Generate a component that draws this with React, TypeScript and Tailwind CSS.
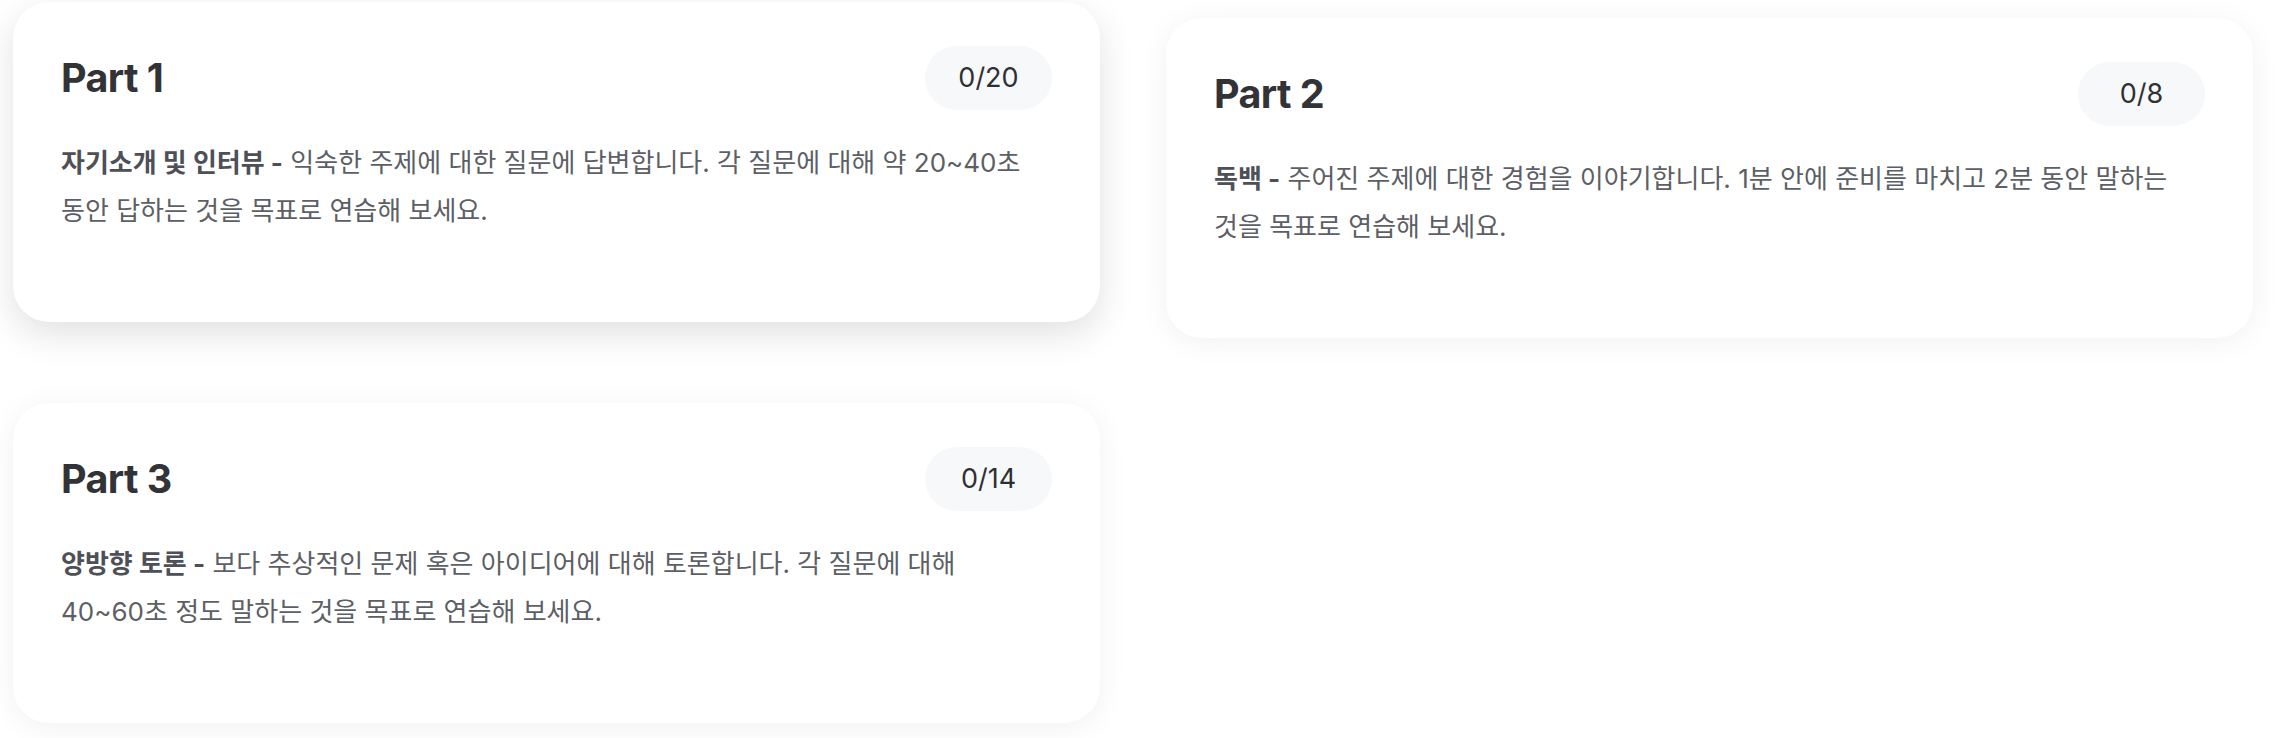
import React from "react";

type Part = {
  title: string;
  count: string;
  lead: string;
  body: string;
  hovered?: boolean;
};

const parts: Part[] = [
  {
    title: "Part 1",
    count: "0/20",
    lead: "자기소개 및 인터뷰 -",
    body: " 익숙한 주제에 대한 질문에 답변합니다. 각 질문에 대해 약 20~40초 동안 답하는 것을 목표로 연습해 보세요.",
    hovered: true,
  },
  {
    title: "Part 2",
    count: "0/8",
    lead: "독백 -",
    body: " 주어진 주제에 대한 경험을 이야기합니다. 1분 안에 준비를 마치고 2분 동안 말하는 것을 목표로 연습해 보세요.",
  },
  {
    title: "Part 3",
    count: "0/14",
    lead: "양방향 토론 -",
    body: " 보다 추상적인 문제 혹은 아이디어에 대해 토론합니다. 각 질문에 대해 40~60초 정도 말하는 것을 목표로 연습해 보세요.",
  },
];

function Card({ p }: { p: Part }) {
  return (
    <div
      className={
        p.hovered
          ? "h-[320px] rounded-[36px] bg-white px-12 pt-[44px] -translate-y-4 shadow-[0_12px_36px_rgba(0,0,0,0.12)]"
          : "h-[320px] rounded-[36px] bg-white px-12 pt-[44px] shadow-[0_4px_30px_rgba(0,0,0,0.06)]"
      }
    >
      <div className="flex h-[64px] items-center justify-between">
        <h2 className="text-[39.5px] font-bold leading-[44px] tracking-[-0.6px] text-[#323337]">
          {p.title}
        </h2>
        <span className="flex h-[64px] min-w-[127px] items-center justify-center rounded-full bg-[#f7f8fa] px-[30px] text-[27px] leading-[40px] text-[#2f3034]">
          {p.count}
        </span>
      </div>
      <p className="mt-[29px] break-keep text-[26px] leading-[48px] text-[#5c5f65]">
        <span className="font-bold text-[#4d5056]">{p.lead}</span>
        {p.body}
      </p>
    </div>
  );
}

export default function App() {
  return (
    <div className="h-[738px] w-full bg-white font-['Inter','Noto_Sans_CJK_KR',sans-serif]">
      <div className="grid grid-cols-[1087px_1087px] gap-x-[66px] gap-y-[65px] pl-[13px] pt-[18px]">
        {parts.map((p) => (
          <Card key={p.title} p={p} />
        ))}
      </div>
    </div>
  );
}
